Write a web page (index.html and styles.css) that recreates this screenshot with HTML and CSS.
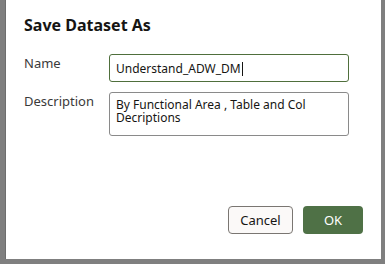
FILE: index.html
```html
<!DOCTYPE html>
<html lang="en">
<head>
  <meta charset="UTF-8" />
  <title>Save Dataset As</title>
  <link rel="stylesheet" href="styles.css">
</head>
<body>
  <div class="dialog">
    <h1 class="title">Save Dataset As</h1>
    <div class="form">
      <div class="row">
        <label class="label" for="ds-name">Name</label>
        <div class="field name-field" id="ds-name">Understand_ADW_DM<span class="caret"></span></div>
      </div>
      <div class="row">
        <label class="label" for="ds-desc">Description</label>
        <div class="field desc-field" id="ds-desc">By Functional Area , Table and Col Decriptions</div>
      </div>
    </div>
    <div class="actions">
      <button class="btn btn-cancel">Cancel</button>
      <button class="btn btn-ok">OK</button>
    </div>
  </div>
</body>
</html>
```

FILE: styles.css
```css
html, body {
  margin: 0;
  padding: 0;
  height: 100%;
}
body {
  background-color: #7f7f7f;
  font-family: 'Noto Sans', 'Open Sans', sans-serif;
  color: #2b2b2b;
  overflow: hidden;
}
.dialog {
  margin-left: 5px;
  width: 376px;
  height: 259px;
  background-color: #fff;
  box-sizing: border-box;
  padding: 14px 18px 0 18px;
  display: flex;
  flex-direction: column;
  border-left: 1px solid #6e6e6e;
}
.title {
  margin: 0;
  font-size: 16px;
  font-weight: 700;
  color: #161513;
  line-height: 22px;
}
.form {
  margin-top: 18px;
  display: flex;
  flex-direction: column;
  gap: 10px;
}
.row {
  display: flex;
  align-items: flex-start;
}
.label {
  width: 85px;
  font-size: 13px;
  color: #3a3a3a;
  line-height: 16px;
  padding-top: 1px;
}
.field {
  width: 240px;
  box-sizing: border-box;
  border-radius: 3px;
  font-size: 12px;
  color: #161513;
  line-height: 13px;
  padding: 0 6px;
}
.name-field {
  height: 28px;
  border: 1px solid #4f6f3c;
  display: flex;
  align-items: center;
  padding-top: 1px;
}
.caret {
  display: inline-block;
  width: 1px;
  height: 14px;
  background: #161513;
  margin-left: 1px;
}
.desc-field {
  height: 44px;
  border: 1px solid #8a8a8a;
  padding-top: 5px;
}
.actions {
  margin-top: auto;
  margin-bottom: 25px;
  display: flex;
  justify-content: flex-end;
  gap: 10px;
}
.btn {
  height: 28px;
  box-sizing: border-box;
  border-radius: 4px;
  font-family: inherit;
  font-size: 13px;
  padding: 0;
  cursor: pointer;
}
.btn-cancel {
  width: 65px;
  background-color: #fbf9f8;
  border: 1px solid #7a7672;
  color: #161513;
}
.btn-ok {
  width: 60px;
  margin-right: 0;
  background-color: #4f7146;
  border: none;
  color: #fff;
}
```
